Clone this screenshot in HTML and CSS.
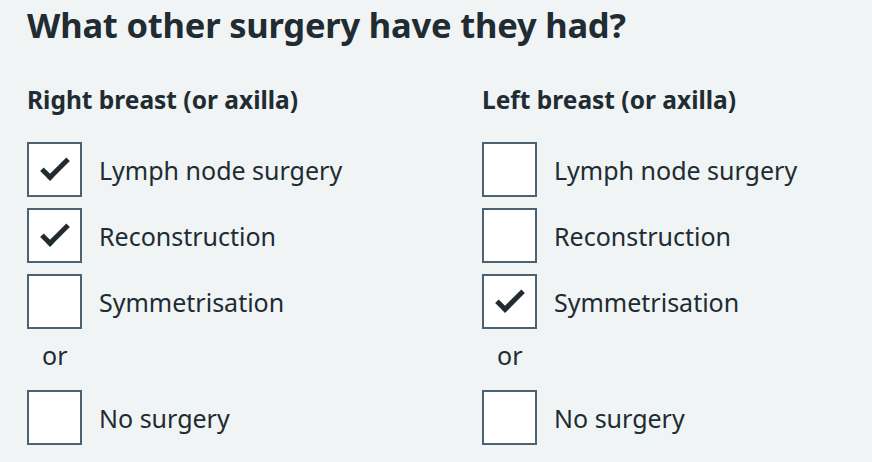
FILE: index.html
```html
<!DOCTYPE html>
<html lang="en">
<head>
<meta charset="utf-8">
<title>What other surgery have they had?</title>
<link rel="stylesheet" href="styles.css">
</head>
<body>
<main class="page">
  <h1 class="title">What other surgery have they had?</h1>
  <div class="columns">
    <fieldset class="group">
      <legend class="legend">Right breast (or axilla)</legend>
      <div class="item"><span class="box checked"></span><span class="label">Lymph node surgery</span></div>
      <div class="item"><span class="box checked"></span><span class="label">Reconstruction</span></div>
      <div class="item"><span class="box"></span><span class="label">Symmetrisation</span></div>
      <div class="or">or</div>
      <div class="item"><span class="box"></span><span class="label">No surgery</span></div>
    </fieldset>
    <fieldset class="group">
      <legend class="legend">Left breast (or axilla)</legend>
      <div class="item"><span class="box"></span><span class="label">Lymph node surgery</span></div>
      <div class="item"><span class="box"></span><span class="label">Reconstruction</span></div>
      <div class="item"><span class="box checked"></span><span class="label">Symmetrisation</span></div>
      <div class="or">or</div>
      <div class="item"><span class="box"></span><span class="label">No surgery</span></div>
    </fieldset>
  </div>
</main>
</body>
</html>
```
FILE: styles.css
```css
html, body {
  margin: 0;
  padding: 0;
  background: #f0f4f5;
}
body {
  font-family: "Noto Sans", "Open Sans", sans-serif;
  color: #212b32;
}
.page {
  padding: 5px 0 0 27px;
}
.title {
  margin: 0;
  font-size: 34.5px;
  font-weight: 700;
  line-height: 40px;
  letter-spacing: -0.2px;
}
.columns {
  display: grid;
  grid-template-columns: 455px auto;
  margin-top: 40px;
}
.group {
  border: 0;
  margin: 0;
  padding: 0;
  min-width: 0;
}
.legend {
  padding: 0;
  font-size: 24.5px;
  font-weight: 700;
  line-height: 30px;
  margin-bottom: 27px;
}
.item {
  display: flex;
  align-items: center;
  gap: 17px;
  height: 55px;
  margin-bottom: 11px;
}
.box {
  box-sizing: border-box;
  width: 55px;
  height: 55px;
  border: 2.5px solid #4c6272;
  background: #ffffff;
  position: relative;
  flex: none;
}
.box.checked::after {
  content: "";
  position: absolute;
  left: 12px;
  top: 15px;
  width: 23px;
  height: 9px;
  border-left: 5px solid #212b32;
  border-bottom: 5px solid #212b32;
  transform: rotate(-45deg);
}
.label {
  font-size: 25px;
  line-height: 30px;
}
.or {
  font-size: 25px;
  line-height: 30px;
  padding-left: 15px;
  margin: 2px 0 20px;
}
```
